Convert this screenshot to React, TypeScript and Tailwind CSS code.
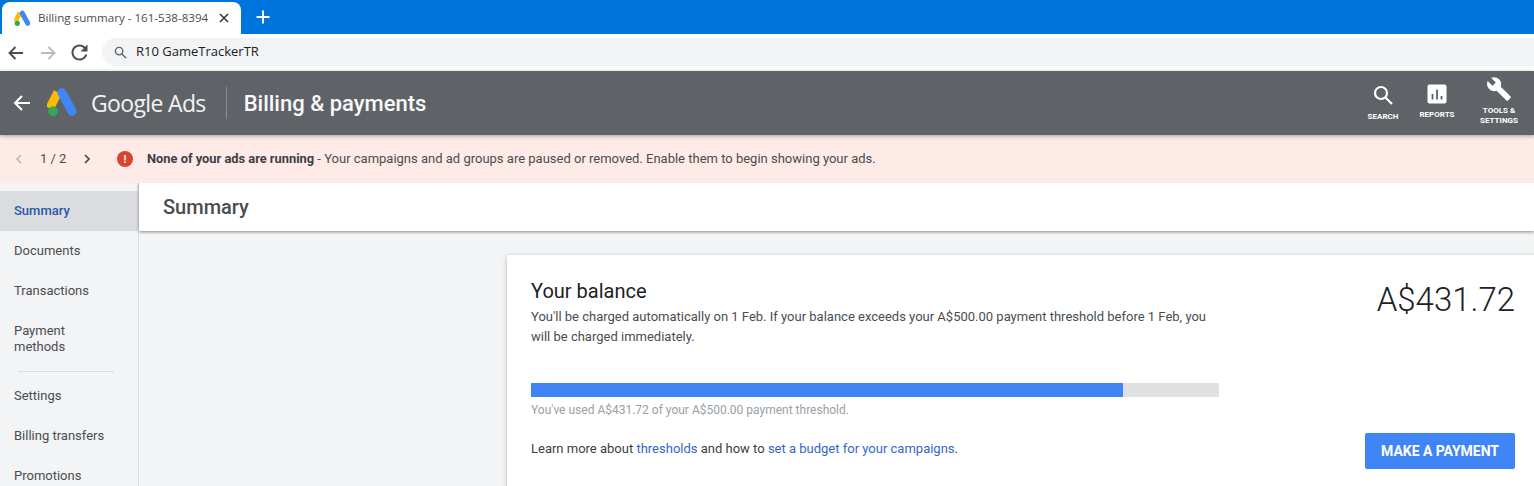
import React from "react";

const AdsLogo = ({ size }: { size: number }) => (
  <svg width={size} height={size} viewBox="0 0 32 32" fill="none">
    <path d="M11.2 5.5 L2.8 22" stroke="#fbbc04" strokeWidth="9" strokeLinecap="butt" />
    <path d="M15.5 6 L25.8 25" stroke="#4285f4" strokeWidth="9.4" strokeLinecap="round" />
    <circle cx="6.2" cy="25" r="5" fill="#34a853" />
  </svg>
);

const Tab = () => (
  <div className="flex items-center w-[239px] h-[32px] mt-[2px] ml-[2px] bg-white rounded-t-[8px] pl-[12px] pr-[11px]">
    <AdsLogo size={17} />
    <span className="ml-[7px] w-[172px] overflow-hidden whitespace-nowrap text-[11.6px] text-[#4a4d50] [font-family:'Open_Sans',sans-serif]">
      Billing summary - 161-538-8394
    </span>
    <svg className="ml-[8px]" width="12" height="12" viewBox="0 0 12 12" stroke="#3c4043" strokeWidth="1.7">
      <path d="M2 2 L10 10 M10 2 L2 10" />
    </svg>
  </div>
);

const NavIcon = ({ d, color, cls }: { d: string; color: string; cls: string }) => (
  <svg className={cls} width="18" height="18" viewBox="0 0 18 18" fill="none" stroke={color} strokeWidth="1.9">
    <path d={d} />
  </svg>
);

const ChromeBar = () => (
  <div className="[font-family:'Open_Sans',sans-serif]">
    <div className="flex h-[34px] bg-[#0074dd]">
      <Tab />
      <svg className="ml-[15px] mt-[10px]" width="14" height="14" viewBox="0 0 14 14" stroke="#fff" strokeWidth="2">
        <path d="M7 0.5 V13.5 M0.5 7 H13.5" />
      </svg>
    </div>
    <div className="flex items-center h-[37px] bg-white">
      <NavIcon cls="ml-[7px]" color="#4a4d50" d="M16 9 H2.5 M8.5 3 L2.5 9 L8.5 15" />
      <NavIcon cls="ml-[14px]" color="#b9bbbe" d="M2 9 H15.5 M9.5 3 L15.5 9 L9.5 15" />
      <svg className="ml-[14px] mt-[-1px]" width="17" height="17" viewBox="3.5 3.5 17 17" fill="#4a4d50">
        <path d="M17.65 6.35A7.958 7.958 0 0 0 12 4C7.58 4 4.01 7.58 4.01 12S7.58 20 12 20c3.73 0 6.84-2.55 7.73-6h-2.08A5.99 5.99 0 0 1 12 18c-3.31 0-6-2.69-6-6s2.69-6 6-6c1.66 0 3.14.69 4.22 1.78L13 11h7V4l-2.35 2.35z" />
      </svg>
      <div className="flex items-center flex-1 h-[28px] ml-[14px] mt-[-1px] rounded-l-[14px] bg-[#f1f3f4] pl-[12px]">
        <svg width="13" height="13" viewBox="0 0 14 14" fill="none" stroke="#5f6368" strokeWidth="1.5">
          <circle cx="5.5" cy="5.5" r="4" />
          <path d="M8.5 8.5 L13 13" />
        </svg>
        <span className="ml-[9px] text-[13px] text-[#202124]">R10 GameTrackerTR</span>
      </div>
    </div>
  </div>
);

const HeaderAction = ({ icon, label, cls }: { icon: React.ReactNode; label: React.ReactNode; cls: string }) => (
  <div className={`flex flex-col items-center text-white ${cls}`}>
    {icon}
    <span className="text-[8px] font-bold leading-[10px] text-center uppercase">{label}</span>
  </div>
);

const Header = () => (
  <div className="relative z-20 flex items-center h-[64px] bg-[#5f6368] shadow-[0_1px_4px_rgba(60,64,67,0.45)] text-white [font-family:Roboto,sans-serif]">
    <svg className="ml-[13px]" width="18" height="18" viewBox="0 0 18 18" fill="none" stroke="#fff" strokeWidth="2">
      <path d="M17 9 H2 M9 2 L2 9 L9 16" />
    </svg>
    <div className="ml-[16px] mt-[-2px]">
      <AdsLogo size={31} />
    </div>
    <span className="ml-[13px] text-[23px] tracking-[-0.65px] text-[#f1f3f4] [font-family:'Open_Sans',sans-serif]">Google Ads</span>
    <div className="w-px h-[32px] ml-[20px] bg-[#8a8e92]" />
    <span className="ml-[17px] text-[22px] font-medium text-[#f8f9fa]">Billing &amp; payments</span>
    <div className="flex items-start ml-auto mr-[13px] h-[52px]">
      <HeaderAction
        cls="w-[40px] mt-[8px]"
        label="Search"
        icon={
          <svg className="mb-[7px]" width="20" height="20" viewBox="0 0 20 20" fill="none" stroke="#fff" strokeWidth="2.2">
            <circle cx="8" cy="8" r="6" />
            <path d="M12.5 12.5 L19 19" />
          </svg>
        }
      />
      <HeaderAction
        cls="w-[40px] ml-[14px] mt-[7px]"
        label="Reports"
        icon={
          <svg className="mb-[6px]" width="20" height="20" viewBox="0 0 20 20">
            <rect x="0.5" y="0.5" width="19" height="19" rx="2" fill="#fff" />
            <path d="M5.5 10 V15.5 M10 5.5 V15.5 M14.5 12 V15.5" stroke="#5f6368" strokeWidth="1.8" />
          </svg>
        }
      />
      <HeaderAction
        cls="w-[44px] ml-[20px] mt-[-1px]"
        label={<>Tools &amp;<br />Settings</>}
        icon={
          <svg className="mb-[4px]" width="26" height="26" viewBox="0 0 24 24" fill="#fff">
            <path d="M22.7 19l-9.1-9.1c.9-2.3.4-5-1.5-6.9-2-2-5-2.4-7.4-1.3L9 6 6 9 1.6 4.7C.4 7.1.9 10.1 2.9 12.1c1.9 1.9 4.6 2.4 6.9 1.5l9.1 9.1c.4.4 1 .4 1.4 0l2.3-2.3c.5-.4.5-1.1.1-1.4z" />
          </svg>
        }
      />
    </div>
  </div>
);

const Notice = () => (
  <div className="relative z-10 flex items-center h-[48px] bg-[#feeae7] text-[13px] text-[#4a4d50] [font-family:Roboto,sans-serif]">
    <svg className="ml-[15px]" width="8" height="10" viewBox="0 0 8 10" fill="none" stroke="#aeb1b5" strokeWidth="1.4">
      <path d="M6 1 L2 5 L6 9" />
    </svg>
    <span className="ml-[17px] w-[28px] text-[13px] whitespace-nowrap">1 / 2</span>
    <svg className="ml-[15px]" width="8" height="10" viewBox="0 0 8 10" fill="none" stroke="#3c4043" strokeWidth="1.6">
      <path d="M2 1 L6 5 L2 9" />
    </svg>
    <div className="ml-[26px] flex items-center justify-center w-[16px] h-[16px] rounded-full bg-[#d9432f] text-white text-[11px] font-bold leading-none">!</div>
    <span className="ml-[14px] whitespace-nowrap">
      <b className="font-bold text-[12.85px] text-[#3c4043]">None of your ads are running</b> - Your campaigns and ad groups are paused or removed. Enable them to begin showing your ads.
    </span>
  </div>
);

const SideItem = ({ children, active }: { children: React.ReactNode; active?: boolean }) => (
  <div className={`flex items-center h-[40px] pl-[14px] ${active ? "bg-[#dadce0] text-[#2a56a8] font-medium" : "text-[#4a4d50]"}`}>
    {children}
  </div>
);

const Sidebar = () => (
  <aside className="shrink-0 w-[139px] h-full pt-[8px] bg-[#f3f4f6] border-r border-[#dadce0] text-[13px] [font-family:Roboto,sans-serif]">
    <SideItem active>Summary</SideItem>
    <SideItem>Documents</SideItem>
    <SideItem>Transactions</SideItem>
    <div className="pl-[14px] pt-[12px] pb-[16px] leading-[16px] text-[#4a4d50]">
      Payment
      <br />
      methods
    </div>
    <div className="w-[96px] h-px ml-[18px] bg-[#dadce0]" />
    <div className="h-[4px]" />
    <SideItem>Settings</SideItem>
    <SideItem>Billing transfers</SideItem>
    <SideItem>Promotions</SideItem>
  </aside>
);

const BalanceCard = () => (
  <div className="ml-[368px] mt-[24px] h-[300px] flex bg-white rounded-l-[2px] shadow-[0_1px_4px_rgba(60,64,67,0.35)] pl-[24px] pr-[19px] pt-[25px]">
    <div className="w-[688px]">
      <div className="text-[20px] leading-[23px] text-[#202124]">Your balance</div>
      <p className="mt-[4px] w-[688px] text-[13px] leading-[20px] text-[#4a4d50]">
        You'll be charged automatically on 1 Feb. If your balance exceeds your A$500.00 payment threshold before 1 Feb, you will be charged immediately.
      </p>
      <div className="mt-[36px] h-[14px] bg-[#e0dfe1]">
        <div className="h-full w-[86%] bg-[#3f85f5]" />
      </div>
      <div className="mt-[6px] text-[12px] leading-[14px] text-[#9aa0a6]">You've used A$431.72 of your A$500.00 payment threshold.</div>
      <div className="mt-[23px] text-[13px] leading-[18px] text-[#3c4043]">
        Learn more about <span className="text-[#3367c6]">thresholds</span> and how to{" "}
        <span className="text-[#3367c6]">set a budget for your campaigns</span>.
      </div>
    </div>
    <div className="ml-auto flex flex-col items-end">
      <div className="mt-[-2px] text-[33px] leading-[44px] text-[#202124] font-light">A$431.72</div>
      <div className="mt-[111px] flex items-center justify-center w-[150px] h-[36px] rounded-[2px] bg-[#3f85f5] text-white text-[14px] font-bold tracking-[-0.05px]">
        MAKE A PAYMENT
      </div>
    </div>
  </div>
);

export default function App() {
  return (
    <div className="w-[1534px] h-[486px] overflow-hidden bg-[#f3f4f6]">
      <ChromeBar />
      <Header />
      <Notice />
      <div className="flex h-[303px]">
        <Sidebar />
        <main className="flex-1 min-w-0 [font-family:Roboto,sans-serif]">
          <div className="flex items-center h-[48px] pl-[24px] bg-white shadow-[0_1px_3px_rgba(60,64,67,0.6)] text-[20px] text-[#4a4d50] font-medium">
            Summary
          </div>
          <BalanceCard />
        </main>
      </div>
    </div>
  );
}
